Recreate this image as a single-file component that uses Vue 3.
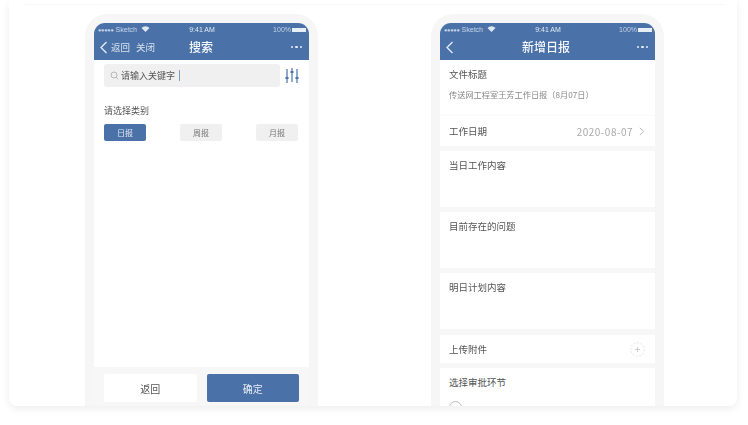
<template>
  <div class="page">
    <div class="card">
      <div class="top-line"></div>
      <div class="phones">
        <!-- search screen -->
        <div class="phone">
          <div class="screen">
            <div class="head">
              <div class="status">
                <span class="st-left"><small>●●●●●</small> Sketch
                  <svg class="wifi" width="9" height="6" viewBox="0 0 8 6"><path d="M0 2a5.6 5.6 0 0 1 8 0L4 6z" fill="#dfe7f1" /></svg>
                </span>
                <span class="st-mid">9:41 AM</span>
                <span class="st-right">100% <i class="batt"></i></span>
              </div>
              <div class="nav">
                <div class="nav-left">
                  <svg width="9" height="13" viewBox="0 0 9 13"><path d="M7.5 1 2 6.5 7.5 12" fill="none" stroke="#e8eef6" stroke-width="1.3" /></svg>
                  <span>返回</span><span class="close">关闭</span>
                </div>
                <div class="nav-title search-title">搜索</div>
                <div class="dots"><i></i><i></i><i></i></div>
              </div>
            </div>
            <div class="search-body">
              <div class="search-row">
                <div class="search-box">
                  <svg width="9" height="9" viewBox="0 0 9 9"><circle cx="4" cy="4" r="3" fill="none" stroke="#aaa" stroke-width=".8" /><path d="m6.2 6.2 2 2" stroke="#aaa" stroke-width=".8" /></svg>
                  <span class="kw">请输入关键字</span>
                  <i class="caret"></i>
                </div>
                <svg class="filter" width="14" height="15" viewBox="0 0 14 15">
                  <g stroke="#4a72a8" stroke-width="1.2" fill="none">
                    <path d="M2 1v14M7 0v14M12 1v14" />
                    <path d="M.5 10h3M5.5 4h3M10.5 10h3" stroke-width="1.8" />
                  </g>
                </svg>
              </div>
              <div class="label">请选择类别</div>
              <div class="tags">
                <span class="tag on">日报</span>
                <span class="tag">周报</span>
                <span class="tag">月报</span>
              </div>
            </div>
            <div class="foot">
              <button class="btn">返回</button>
              <button class="btn primary">确定</button>
            </div>
          </div>
        </div>

        <!-- new report screen -->
        <div class="phone">
          <div class="screen grey">
            <div class="head">
              <div class="status">
                <span class="st-left"><small>●●●●●</small> Sketch
                  <svg class="wifi" width="9" height="6" viewBox="0 0 8 6"><path d="M0 2a5.6 5.6 0 0 1 8 0L4 6z" fill="#dfe7f1" /></svg>
                </span>
                <span class="st-mid">9:41 AM</span>
                <span class="st-right">100% <i class="batt"></i></span>
              </div>
              <div class="nav">
                <div class="nav-left">
                  <svg width="9" height="13" viewBox="0 0 9 13"><path d="M7.5 1 2 6.5 7.5 12" fill="none" stroke="#e8eef6" stroke-width="1.3" /></svg>
                </div>
                <div class="nav-title report-title">新增日报</div>
                <div class="dots"><i></i><i></i><i></i></div>
              </div>
            </div>
            <div class="sec file">
              <div class="sec-title">文件标题</div>
              <div class="file-name">传送网工程室王芳工作日报（8月07日）</div>
            </div>
            <div class="sec row date">
              <span class="sec-title">工作日期</span>
              <span class="date-val">2020-08-07
                <svg width="6" height="9" viewBox="0 0 6 9"><path d="m1 .8 3.6 3.7L1 8.2" fill="none" stroke="#aaa" stroke-width=".9" /></svg>
              </span>
            </div>
            <div class="sec block" v-for="t in blocks" :key="t">
              <div class="sec-title">{{ t }}</div>
            </div>
            <div class="sec row upload">
              <span class="sec-title">上传附件</span>
              <svg width="15" height="15" viewBox="0 0 15 15">
                <circle cx="7.5" cy="7.5" r="6.8" fill="none" stroke="#ddd" stroke-width=".8" stroke-dasharray="2 1.5" />
                <path d="M7.5 5v5M5 7.5h5" stroke="#c4c4c4" stroke-width=".8" />
              </svg>
            </div>
            <div class="sec approve">
              <div class="sec-title">选择审批环节</div>
              <i class="radio"></i>
            </div>
          </div>
        </div>
      </div>
    </div>
  </div>
</template>

<script setup>
const blocks = ['当日工作内容', '目前存在的问题', '明日计划内容']
</script>

<style>
html, body {
  margin: 0;
  background: #fff;
}
</style>

<style scoped>
.page {
  width: 748px;
  height: 425px;
  overflow: hidden;
  background: #fff;
  padding-left: 9px;
  box-sizing: border-box;
  font-family: "Noto Sans CJK SC", "Liberation Sans", sans-serif;
}
.card {
  position: relative;
  width: 728px;
  height: 406px;
  background: #fff;
  border-radius: 0 0 8px 8px;
  box-shadow: 0 3px 9px rgba(0, 0, 0, 0.07);
  clip-path: inset(0 -12px -16px -12px);
}
.top-line {
  position: absolute;
  top: 4px;
  left: 16px;
  right: 12px;
  height: 1px;
  background: #f7f7f7;
}
.phones {
  display: flex;
  gap: 113px;
  height: 406px;
  padding: 14px 0 0 76px;
  box-sizing: border-box;
  overflow: hidden;
  border-radius: 0 0 8px 8px;
  filter: blur(0.35px);
}
.phone {
  width: 233px;
  height: 392px;
  box-sizing: border-box;
  padding: 9px 9px 0;
  background: #f6f6f6;
  border-radius: 22px 22px 0 0;
  flex-shrink: 0;
}
.screen {
  height: 383px;
  background: #fff;
  border-radius: 11px 11px 0 0;
  overflow: hidden;
  display: flex;
  flex-direction: column;
}
.screen.grey {
  background: #f7f7f7;
}
.head {
  height: 37px;
  background: #4a72a8;
  color: #e8eef6;
  flex-shrink: 0;
}
.status {
  height: 13px;
  display: grid;
  grid-template-columns: 1fr auto 1fr;
  align-items: center;
  font-size: 7px;
  padding: 0 3px 0 4px;
  font-family: "Liberation Sans", sans-serif;
  color: #c5d3e6;
}
.st-left {
  white-space: nowrap;
}
.st-left small {
  font-size: 5.5px;
  letter-spacing: -0.2px;
  vertical-align: 0.5px;
}
.wifi {
  margin-left: 2px;
}
.st-mid {
  color: #e3eaf3;
}
.st-right {
  display: flex;
  align-items: center;
  justify-content: flex-end;
  gap: 1px;
  white-space: nowrap;
}
.batt {
  display: block;
  width: 14px;
  height: 4px;
  background: #e8eef6;
}
.nav {
  position: relative;
  height: 24px;
  display: flex;
  align-items: center;
  justify-content: space-between;
  padding: 0 7px 2px 5px;
  box-sizing: border-box;
}
.nav-left {
  display: flex;
  align-items: center;
  font-size: 9.5px;
  gap: 3px;
  color: #d9e3ef;
}
.close {
  margin-left: 3px;
}
.nav-title {
  position: absolute;
  top: 0;
  color: #f4f7fb;
  line-height: 22px;
  font-weight: 500;
  font-size: 12px;
}
.search-title {
  left: 95px;
}
.report-title {
  left: 82px;
}
.dots {
  display: flex;
  gap: 2px;
}
.dots i {
  width: 2.5px;
  height: 2.5px;
  border-radius: 50%;
  background: #e8eef6;
}
.search-body {
  flex: 1;
  padding: 4px 10px 0 10px;
}
.search-row {
  display: flex;
  align-items: center;
  justify-content: space-between;
}
.search-box {
  width: 176px;
  height: 23px;
  background: #f0f0f0;
  border-radius: 3px;
  display: flex;
  align-items: center;
  padding-left: 6px;
  box-sizing: border-box;
  font-size: 9px;
  color: #555;
  gap: 2px;
}
.caret {
  width: 1px;
  height: 11px;
  background: #7e9cc6;
  margin-left: 2px;
}
.label {
  margin-top: 17px;
  font-size: 9px;
  line-height: 13px;
  color: #555;
}
.tags {
  margin-top: 7px;
  display: flex;
  justify-content: space-between;
  padding-right: 1px;
}
.tag {
  width: 42px;
  height: 17px;
  line-height: 17px;
  text-align: center;
  font-size: 8px;
  color: #777;
  background: #f0f0f0;
  border-radius: 2px;
}
.tag.on {
  background: #4a72a8;
  color: #dfe7f1;
}
.foot {
  height: 39px;
  padding: 7px 10px 0;
  box-sizing: border-box;
  background: #f7f7f7;
  display: flex;
  gap: 10px;
  flex-shrink: 0;
}
.btn {
  width: 93px;
  height: 28px;
  border: 0;
  padding: 0;
  font-family: inherit;
  font-size: 10px;
  color: #555;
  background: #fff;
  border-radius: 2px;
}
.btn.primary {
  background: #4a72a8;
  color: #e8eef6;
}
.sec {
  background: #fff;
  padding: 0 10px 0 9px;
  flex-shrink: 0;
}
.sec-title {
  font-size: 9.5px;
  line-height: 14px;
  color: #555;
}
.file {
  height: 55px;
  padding-top: 7px;
  box-sizing: border-box;
}
.file-name {
  margin-top: 7px;
  font-size: 8.2px;
  line-height: 12px;
  color: #888;
  white-space: nowrap;
}
.row {
  display: flex;
  align-items: center;
  justify-content: space-between;
}
.date {
  height: 31px;
  border-top: 1px solid #fafafa;
  box-sizing: border-box;
}
.date-val {
  display: flex;
  align-items: center;
  gap: 6px;
  font-size: 10px;
  letter-spacing: 0.5px;
  color: #aaa;
}
.block {
  height: 56px;
  margin-top: 5px;
  padding-top: 7px;
  box-sizing: border-box;
}
.upload {
  height: 28px;
  margin-top: 6px;
}
.approve {
  margin-top: 5px;
  flex: 1;
  padding-top: 7px;
}
.radio {
  display: block;
  width: 11px;
  height: 11px;
  margin-top: 12px;
  border: 1px solid #bbb;
  border-radius: 50%;
}
</style>
